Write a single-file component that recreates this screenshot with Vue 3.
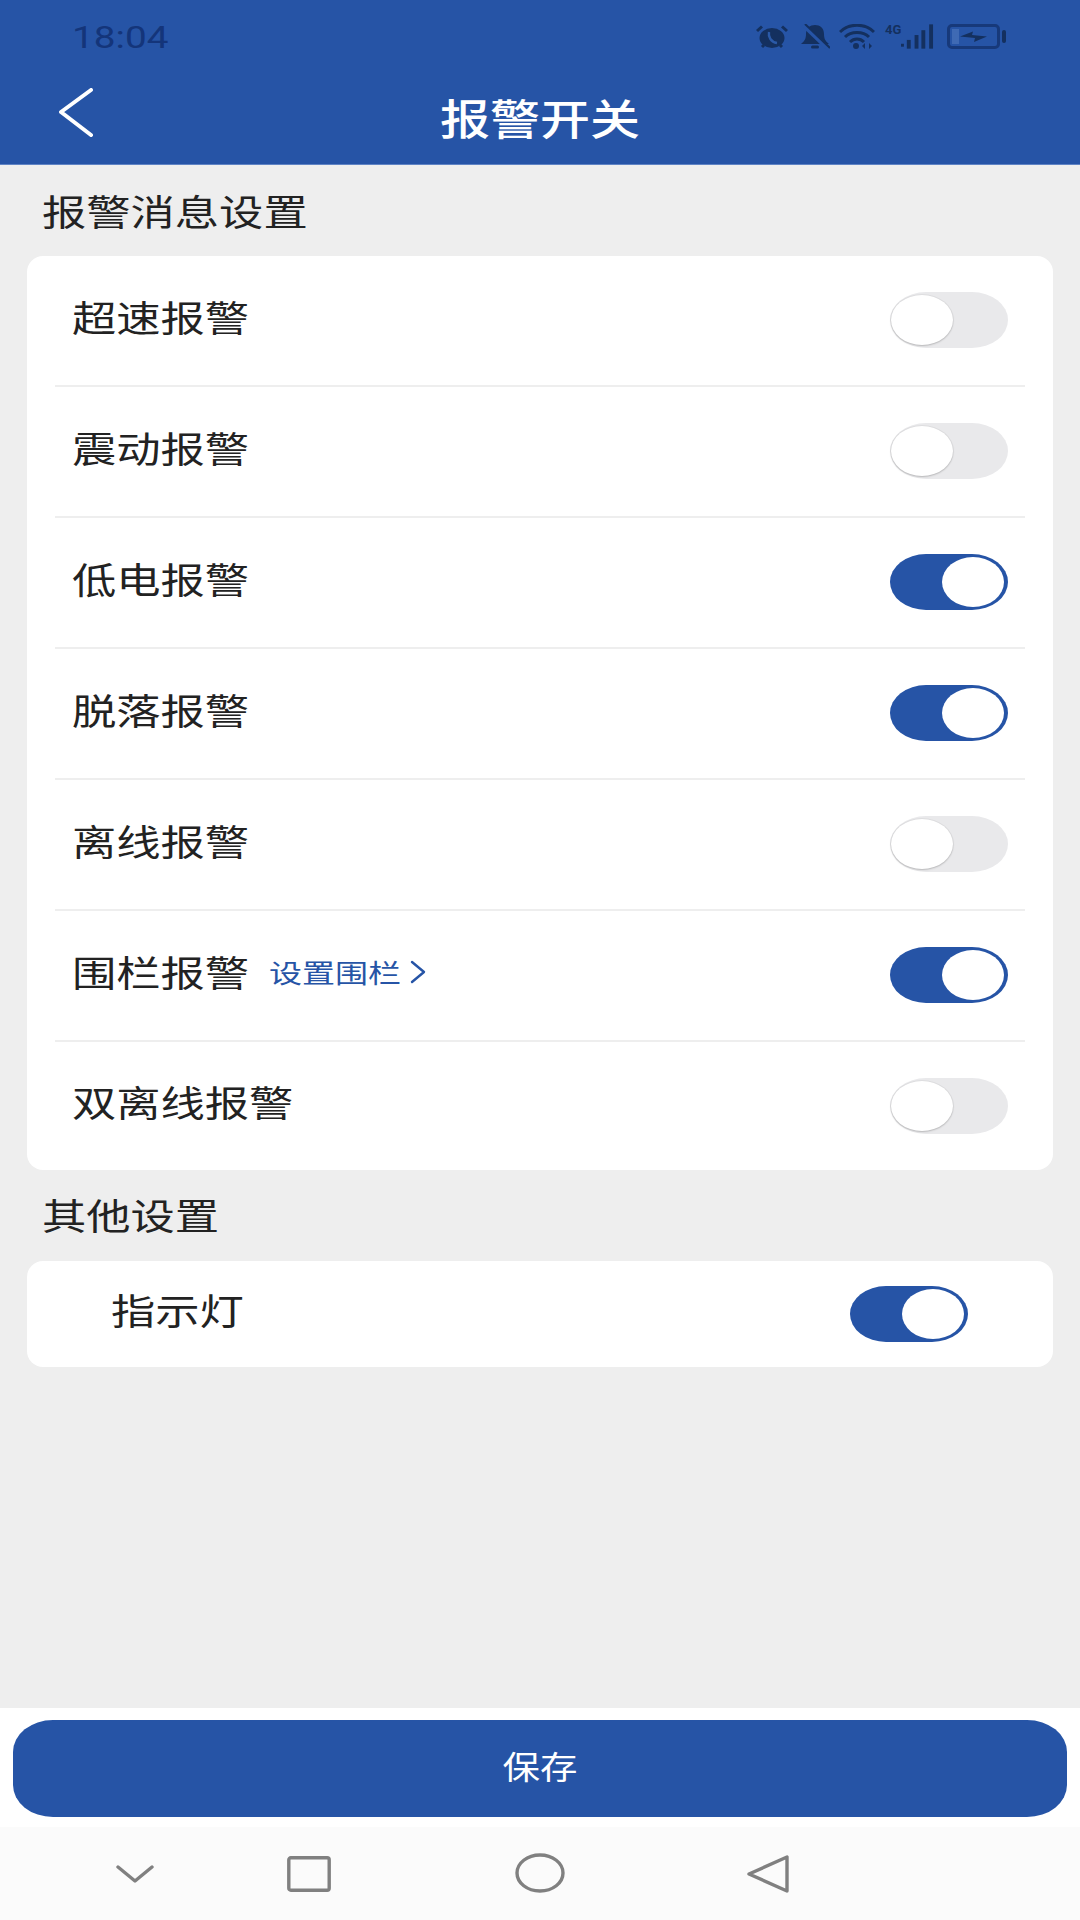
<script setup>
const alarms = [
  { name: '超速报警', on: false },
  { name: '震动报警', on: false },
  { name: '低电报警', on: true },
  { name: '脱落报警', on: true },
  { name: '离线报警', on: false },
  { name: '围栏报警', on: true, link: '设置围栏' },
  { name: '双离线报警', on: false }
]
</script>

<template>
  <div class="page">
    <header class="header">
      <div class="status">
        <span class="time">18:04</span>
        <div class="status-icons">
          <svg class="i-alarm" viewBox="0 0 32 24">
            <ellipse cx="16" cy="13" rx="12.5" ry="10" fill="#14305f" />
            <path d="M1 6 L6 1.5 M31 6 L26 1.5 M6 22 L8 20 M26 22 L24 20" stroke="#14305f" stroke-width="3" fill="none" />
            <path d="M13 7 C12 12 15 17 21 18" stroke="#2b5aa8" stroke-width="2.4" fill="none" />
          </svg>
          <svg class="i-bell" viewBox="0 0 30 26">
            <path d="M1 20 C5 17 6 14 6 10 C6 4 10 1 15 1 C20 1 24 4 24 10 C24 14 25 17 29 20 Z" fill="#14305f" />
            <rect x="11" y="21.5" width="8" height="3" rx="1.5" fill="#14305f" />
            <path d="M3 1 L28 25" stroke="#2654a6" stroke-width="4" />
            <path d="M5 0 L30 24" stroke="#14305f" stroke-width="2" />
          </svg>
          <svg class="i-wifi" viewBox="0 0 36 25">
            <path d="M1 8 C10 -1 26 -1 35 8 M6 13 C12 7 24 7 30 13 M11 18 C15 14 21 14 25 18" stroke="#14305f" stroke-width="3" fill="none" />
            <circle cx="17" cy="22" r="3" fill="#14305f" />
            <path d="M26 19 L26 25 L23 22 Z M30 19 L30 25 L33 22 Z" fill="#14305f" />
          </svg>
          <div class="sig">
            <span class="g4">4G</span>
            <svg class="i-signal" viewBox="0 0 34 25">
              <rect x="0" y="20" width="3" height="3" fill="#14305f" />
              <rect x="6" y="16" width="4" height="9" fill="#14305f" />
              <rect x="14" y="11" width="4" height="14" fill="#14305f" />
              <rect x="21" y="6" width="4" height="19" fill="#14305f" />
              <rect x="29" y="0" width="4" height="25" fill="#14305f" />
            </svg>
          </div>
          <svg class="i-batt" viewBox="0 0 60 25">
            <rect x="1.5" y="1.5" width="50" height="22" rx="3.5" fill="none" stroke="#17397a" stroke-width="3" />
            <rect x="5" y="5" width="7" height="15" fill="#3f6ab4" />
            <path d="M13 12.5 L26 7.5 L25 11 L40 12.5 L27 18 L28 14 Z" fill="#14305f" />
            <rect x="55" y="6" width="4" height="13" rx="2" fill="#14305f" />
          </svg>
        </div>
      </div>
      <div class="bar">
        <svg class="back" viewBox="0 0 36 50">
          <path d="M33 2 L3 24 L33 47" fill="none" stroke="#fff" stroke-width="4" stroke-linecap="round" stroke-linejoin="round" />
        </svg>
        <span class="title">报警开关</span>
      </div>
    </header>

    <main class="main">
      <div class="label"><span class="tx">报警消息设置</span></div>
      <section class="card">
        <div v-for="a in alarms" :key="a.name" class="row">
          <div class="row-left">
            <span class="tx name">{{ a.name }}</span>
            <span v-if="a.link" class="link">
              <span class="link-tx">{{ a.link }}</span>
              <svg class="link-arrow" viewBox="0 0 16 24">
                <path d="M2 2 L14 12 L2 22" fill="none" stroke="#2654a6" stroke-width="2.4" stroke-linecap="round" stroke-linejoin="round" />
              </svg>
            </span>
          </div>
          <div class="sw" :class="{ on: a.on }"><div class="knob"></div></div>
        </div>
      </section>

      <div class="label label-other"><span class="tx">其他设置</span></div>
      <section class="card card-other">
        <span class="tx name">指示灯</span>
        <div class="sw on"><div class="knob"></div></div>
      </section>
    </main>

    <footer class="foot">
      <button class="save"><span class="save-tx">保存</span></button>
    </footer>

    <nav class="nav">
      <svg class="n-down" viewBox="0 0 38 18">
        <path d="M2 2 L19 16 L36 2" fill="none" stroke="#808080" stroke-width="3.4" stroke-linecap="round" stroke-linejoin="round" />
      </svg>
      <svg class="n-square" viewBox="0 0 44 36">
        <rect x="1.8" y="1.8" width="40.4" height="32.4" rx="2" fill="none" stroke="#808080" stroke-width="3.4" />
      </svg>
      <svg class="n-circle" viewBox="0 0 50 40">
        <ellipse cx="25" cy="20" rx="23" ry="18" fill="none" stroke="#808080" stroke-width="3.4" />
      </svg>
      <svg class="n-back" viewBox="0 0 42 40">
        <path d="M40 3 L40 37 L2 20 Z" fill="none" stroke="#808080" stroke-width="3.4" stroke-linejoin="round" />
      </svg>
    </nav>
  </div>
</template>

<style scoped>
.page {
  width: 1080px;
  height: 1920px;
  display: flex;
  flex-direction: column;
  background: #eeeeee;
  font-family: "Noto Sans CJK SC", "Noto Sans", sans-serif;
  color: #222222;
  overflow: hidden;
}
.header {
  height: 165px;
  background: #2654a6;
  border-bottom: 1px solid #5f83c4;
  box-sizing: border-box;
  flex: none;
}
.status {
  height: 74px;
  display: flex;
  align-items: flex-start;
  justify-content: space-between;
  padding: 24px 73px 0 72px;
  box-sizing: border-box;
}
.time {
  font-family: Roboto, "Liberation Sans", sans-serif;
  font-size: 31px;
  font-weight: 400;
  line-height: 28px;
  color: #14357a;
  display: inline-block;
  transform: scaleX(1.25);
  transform-origin: left center;
}
.status-icons {
  display: flex;
  align-items: flex-start;
}
.i-alarm { width: 32px; height: 24px; margin-top: 1px; }
.i-bell { width: 30px; height: 26px; margin-left: 12px; }
.i-wifi { width: 36px; height: 25px; margin-left: 9px; }
.sig { display: flex; margin-left: 10px; position: relative; width: 49px; height: 25px; justify-content: flex-end; }
.g4 {
  position: absolute;
  left: 0;
  top: -1px;
  font-family: Roboto, sans-serif;
  font-size: 13px;
  line-height: 14px;
  font-weight: 700;
  color: #14305f;
}
.i-signal { width: 33px; height: 25px; }
.i-batt { width: 60px; height: 25px; margin-left: 13px; }
.bar {
  height: 90px;
  position: relative;
  display: flex;
  align-items: center;
  justify-content: center;
}
.back {
  position: absolute;
  left: 58px;
  top: 14px;
  width: 36px;
  height: 50px;
}
.title {
  font-size: 42px;
  font-weight: 500;
  color: #ffffff;
  line-height: 50px;
  display: inline-block;
  transform: scaleX(1.19);
  margin-top: -5px;
}
.main {
  flex: 1;
  padding: 0 27px;
}
.label {
  height: 91px;
  display: flex;
  align-items: center;
  padding-left: 15px;
  padding-bottom: 2px;
  box-sizing: border-box;
}
.label-other {
  padding-bottom: 4px;
}
.tx {
  display: inline-block;
  font-size: 36px;
  line-height: 44px;
  transform: scaleX(1.23);
  transform-origin: left center;
  white-space: nowrap;
}
.card {
  background: #ffffff;
  border-radius: 16px;
}
.row {
  height: 131px;
  margin: 0 28px;
  padding: 0 17px 0 17px;
  border-bottom: 2px solid #eeeeee;
  box-sizing: border-box;
  display: flex;
  align-items: center;
  justify-content: space-between;
}
.row:last-child {
  border-bottom: 0;
  height: 128px;
}
.row-left {
  display: flex;
  align-items: center;
  margin-top: -10px;
}
.name {
  width: 168px;
}
.row:last-child .name {
  width: 210px;
}
.link {
  display: flex;
  align-items: center;
  margin-left: 29px;
  margin-top: 2px;
}
.link-tx {
  display: inline-block;
  width: 125px;
  font-size: 26px;
  line-height: 32px;
  color: #2654a6;
  white-space: nowrap;
  transform: scaleX(1.27);
  transform-origin: left center;
}
.link-arrow {
  width: 16px;
  height: 24px;
  margin-left: 16px;
}
.card-other {
  height: 106px;
  padding: 0 85px 0 84px;
  display: flex;
  align-items: center;
  justify-content: space-between;
}
.card-other .name {
  width: 125px;
  margin-top: -10px;
}
.card-other .sw {
  margin-top: 0;
}
.sw {
  width: 118px;
  height: 56px;
  margin-top: -1px;
  border-radius: 36px / 28px;
  background: #e9e9eb;
  display: flex;
  align-items: center;
  justify-content: flex-start;
  padding: 0 1px;
  box-sizing: border-box;
  flex: none;
}
.sw.on {
  background: #2654a6;
  justify-content: flex-end;
  padding: 0 4px;
}
.knob {
  width: 62px;
  height: 50px;
  border-radius: 50%;
  background: #ffffff;
  box-shadow: 0 1px 2px rgba(0, 0, 0, 0.18), 0 0 0 1px rgba(0, 0, 0, 0.04);
}
.sw.on .knob {
  box-shadow: none;
}
.foot {
  height: 119px;
  background: #ffffff;
  padding: 12px 13px 10px 13px;
  box-sizing: border-box;
  flex: none;
}
.save {
  width: 100%;
  height: 97px;
  border: 0;
  border-radius: 40px / 32px;
  background: #2654a6;
  display: flex;
  align-items: center;
  justify-content: center;
  padding: 0;
  font-family: inherit;
}
.save-tx {
  display: inline-block;
  font-size: 32px;
  line-height: 40px;
  color: #ffffff;
  transform: scaleX(1.17);
  margin-top: -8px;
}
.nav {
  height: 93px;
  background: #fbfbfb;
  flex: none;
  position: relative;
}
.nav svg {
  position: absolute;
}
.n-down { left: 116px; top: 38px; width: 38px; height: 18px; }
.n-square { left: 287px; top: 29px; width: 44px; height: 36px; }
.n-circle { left: 515px; top: 26px; width: 50px; height: 40px; }
.n-back { left: 747px; top: 27px; width: 42px; height: 40px; }
</style>

<style>
html, body { margin: 0; padding: 0; }
</style>
